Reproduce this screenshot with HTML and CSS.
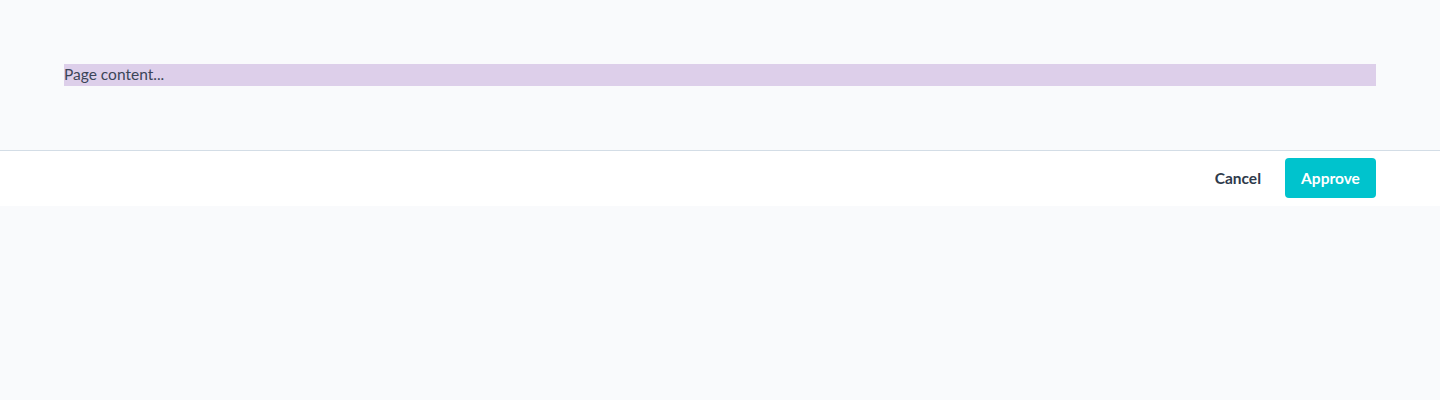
FILE: index.html
```html
<!DOCTYPE html>
<html>
<head>
<meta charset="utf-8">
<link rel="stylesheet" href="styles.css">
</head>
<body>
<main class="page">
  <div class="content">Page content...</div>
</main>
<footer class="footer">
  <button class="btn btn-cancel">Cancel</button>
  <button class="btn btn-approve">Approve</button>
</footer>
</body>
</html>
```
FILE: styles.css
```css
html, body {
  margin: 0;
  padding: 0;
  background: #f9fafc;
  font-family: "Lato", "Open Sans", sans-serif;
}
.page {
  padding: 64px;
}
.content {
  background: #ddcfea;
  color: #3b4558;
  font-size: 15.5px;
  line-height: 21px;
  height: 22px;
}
.footer {
  display: flex;
  justify-content: flex-end;
  align-items: flex-start;
  gap: 8px;
  background: #ffffff;
  border-top: 1px solid #d3dde6;
  padding: 7px 64px 8px;
}
.btn {
  font-family: inherit;
  font-size: 15.5px;
  font-weight: 700;
  border: none;
  border-radius: 4px;
  height: 40px;
  line-height: 38px;
  cursor: pointer;
}
.btn-cancel {
  background: transparent;
  color: #2e3a4b;
  padding: 0 16px;
}
.btn-approve {
  background: #00c3cd;
  color: #ffffff;
  width: 91px;
  padding: 0;
}
```
